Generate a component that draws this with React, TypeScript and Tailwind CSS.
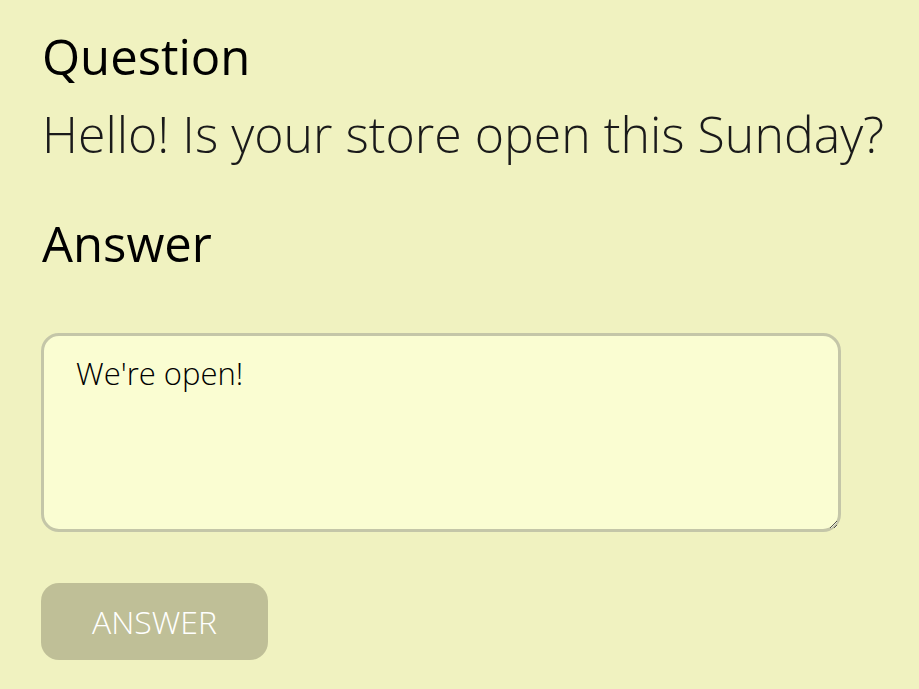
import React from "react";

export default function App() {
  return (
    <div className="min-h-[689px] w-full bg-[#f0f2c0] px-[42px] pt-[26px]" style={{ fontFamily: '"Open Sans", "Noto Sans", sans-serif' }}>
      <h2 className="text-[49px] leading-[60px] font-normal text-black">Question</h2>
      <p className="mt-[18px] text-[50px] leading-[60px] font-light text-[#1a1a1a] whitespace-nowrap">Hello! Is your store open this Sunday?</p>
      <h2 className="mt-[49px] text-[49px] leading-[60px] font-normal text-black">Answer</h2>
      <textarea
        className="mt-[60px] block h-[199px] w-[800px] -ml-[1px] rounded-[18px] border-[3px] border-[#c4c6a8] bg-[#fafdd2] px-[32px] pt-[15px] pb-[10px] text-[31px] leading-[45px] font-light text-black outline-none"
        defaultValue="We're open!"
      />
      <button className="mt-[51px] -ml-[1px] h-[77px] w-[227px] rounded-[18px] bg-[#bfbf97] text-[32px] font-light text-white">ANSWER</button>
    </div>
  );
}
